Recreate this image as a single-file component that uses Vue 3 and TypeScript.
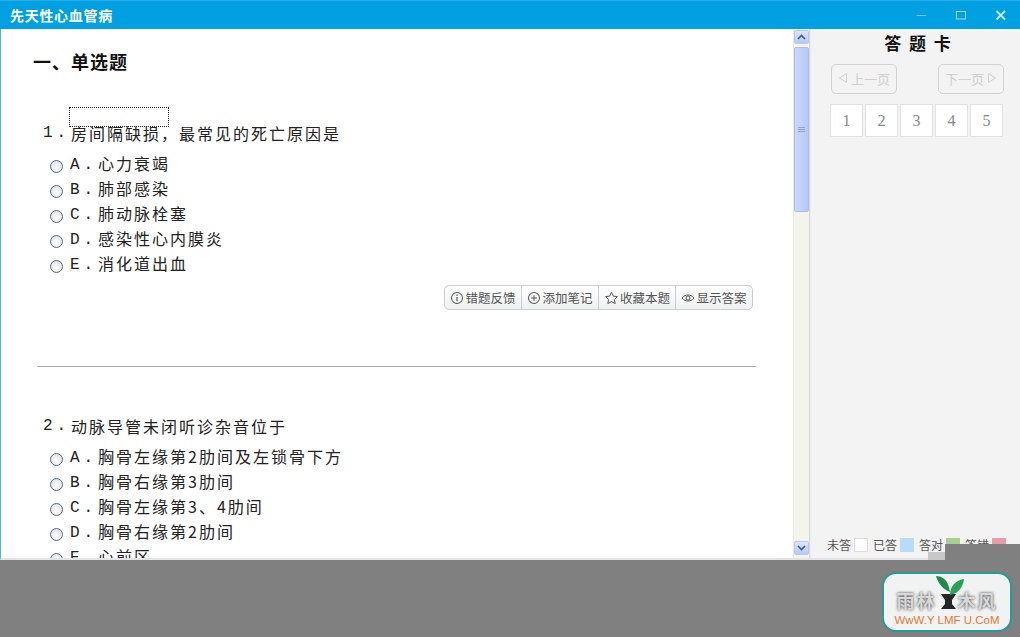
<script setup lang="ts">
interface Question { no: number; title: string; options: string[] }
const questions: Question[] = [
  { no: 1, title: '房间隔缺损，最常见的死亡原因是', options: ['心力衰竭', '肺部感染', '肺动脉栓塞', '感染性心内膜炎', '消化道出血'] },
  { no: 2, title: '动脉导管未闭听诊杂音位于', options: ['胸骨左缘第2肋间及左锁骨下方', '胸骨右缘第3肋间', '胸骨左缘第3、4肋间', '胸骨右缘第2肋间', '心前区'] },
]
const letters = ['A', 'B', 'C', 'D', 'E']
const tools = ['错题反馈', '添加笔记', '收藏本题', '显示答案']
const pages = [1, 2, 3, 4, 5]
</script>

<template>
  <div class="page">
    <div class="window">
      <header class="titlebar">
        <span class="title">先天性心血管病</span>
        <div class="winctl">
          <svg width="12" height="12" viewBox="0 0 12 12"><path d="M1.5 6.5h9.5" stroke="#6fc6ee" stroke-width="1" /></svg>
          <svg width="12" height="12" viewBox="0 0 12 12"><rect x="1.5" y="2.5" width="9" height="7.5" fill="none" stroke="#9adcf6" stroke-width="1" /></svg>
          <svg width="12" height="12" viewBox="0 0 12 12"><path d="M1.5 2l8.5 8.5M10 2l-8.5 8.5" stroke="#c4ecfb" stroke-width="1.8" /></svg>
        </div>
      </header>
      <div class="body">
        <main class="paper">
          <h2 class="section">一、单选题</h2>
          <section v-for="q in questions" :key="q.no" class="question" :class="'q' + q.no">
            <div v-if="q.no === 1" class="focusbox"></div>
            <div class="qtitle"><span class="num">{{ q.no }}.</span><span>{{ q.title }}</span></div>
            <div v-for="(o, i) in q.options" :key="o" class="opt">
              <span class="radio"></span>
              <span class="letter">{{ letters[i] }}.</span><span class="otext">{{ o }}</span>
            </div>
            <div v-if="q.no === 1" class="tools">
              <div v-for="(t, i) in tools" :key="t" class="tool">
                <svg v-if="i === 0" width="14" height="14" viewBox="0 0 14 14"><circle cx="7" cy="7" r="5.5" fill="none" stroke="#555" /><path d="M7 6v4.2M7 3.6v1.3" stroke="#555" stroke-width="1.2" /></svg>
                <svg v-else-if="i === 1" width="14" height="14" viewBox="0 0 14 14"><circle cx="7" cy="7" r="5.5" fill="none" stroke="#555" /><path d="M7 4v6M4 7h6" stroke="#555" /></svg>
                <svg v-else-if="i === 2" width="15" height="14" viewBox="0 0 15 14"><path d="M7.5 1.3l1.8 3.8 4.1.5-3 2.9.8 4.1-3.7-2-3.7 2 .8-4.1-3-2.9 4.1-.5z" fill="none" stroke="#555" /></svg>
                <svg v-else width="14" height="14" viewBox="0 0 14 14"><path d="M1 7c3-4 9-4 12 0-3 4-9 4-12 0z" fill="none" stroke="#555" /><circle cx="7" cy="7" r="2" fill="none" stroke="#555" /></svg>
                <span>{{ t }}</span>
              </div>
            </div>
            <hr v-if="q.no === 1" class="rule" />
          </section>
        </main>
        <div class="scrollbar">
          <div class="arrow up"><svg width="9" height="6" viewBox="0 0 9 6"><path d="M1 5l3.5-3.5L8 5" fill="none" stroke="#3a5a8c" stroke-width="1.6" /></svg></div>
          <div class="track">
            <div class="thumb"><span class="grip"></span></div>
          </div>
          <div class="arrow down"><svg width="9" height="6" viewBox="0 0 9 6"><path d="M1 1l3.5 3.5L8 1" fill="none" stroke="#3a5a8c" stroke-width="1.6" /></svg></div>
        </div>
        <aside class="card">
          <div class="cardtitle">答 题 卡</div>
          <div class="pager">
            <button class="pbtn"><svg width="10" height="12" viewBox="0 0 10 12"><path d="M8.5 1.5v9L1.5 6z" fill="none" stroke="#d0d0d0" /></svg><span>上一页</span></button>
            <button class="pbtn"><span>下一页</span><svg width="10" height="12" viewBox="0 0 10 12"><path d="M1.5 1.5v9L8.5 6z" fill="none" stroke="#d0d0d0" /></svg></button>
          </div>
          <div class="nums">
            <div v-for="p in pages" :key="p" class="numcell">{{ p }}</div>
          </div>
          <div class="legend">
            <span>未答</span><i class="sw white"></i>
            <span>已答</span><i class="sw blue"></i>
            <span>答对</span><i class="sw green"></i>
            <span>答错</span><i class="sw red"></i>
          </div>
        </aside>
      </div>
    </div>
    <div class="patch-light"></div>
    <div class="patch-grey"></div>
    <div class="logo">
      <svg class="sprout" width="32" height="38" viewBox="0 0 32 38">
        <path d="M7 20h15l-4 6v4l4 5H7l4-5v-4z" fill="#262626" />
        <path d="M2 2c6 0 12 3 14 16C10 16 4 10 2 2z" fill="#1f8a4c" />
        <path d="M16 21c0-9 6-15 14-16-1 8-6 15-14 16z" fill="#2aa05a" />
      </svg>
      <div class="logotext"><span>雨林</span><span class="gap">木风</span></div>
      <div class="logourl">WwW.Y LMF U.CoM</div>
    </div>
  </div>
</template>

<style scoped>
.page {
  position: relative;
  width: 1020px;
  height: 637px;
  background: #808080;
  overflow: hidden;
  font-family: "Noto Sans CJK SC", sans-serif;
}
.window {
  height: 558px;
  display: flex;
  flex-direction: column;
  border-left: 1px solid #4fb6e4;
  border-bottom: 2px solid #e4e4e4;
  background: #fff;
}
.titlebar {
  height: 29px;
  flex: none;
  margin-left: -1px;
  background: #00a0e3;
  border-top: 1px solid #27aeea;
  box-sizing: border-box;
  display: flex;
  align-items: center;
  justify-content: space-between;
  padding: 0 13px 0 10px;
}
.title {
  color: #fff;
  font-size: 14px;
  font-weight: 700;
  letter-spacing: 0.7px;
}
.winctl {
  display: flex;
  gap: 28px;
}
.body {
  flex: 1;
  display: flex;
  min-height: 0;
}
.paper {
  width: 792px;
  flex: none;
  overflow: hidden;
  padding: 21px 0 0 32px;
  box-sizing: border-box;
  color: #222;
}
.section {
  margin: 0;
  font-size: 18px;
  line-height: 22px;
  font-weight: 700;
  color: #111;
  letter-spacing: 1px;
}
.question { position: relative; }
.q1 { padding-top: 50px; }
.q2 { padding-top: 48px; }
.focusbox {
  position: absolute;
  left: 36px;
  top: 35px;
  width: 98px;
  height: 18px;
  border: 1px dotted #222;
}
.qtitle {
  font-size: 16px;
  line-height: 22px;
  letter-spacing: 2px;
  margin-left: 10px;
  display: flex;
  margin-bottom: 10px;
}
.num {
  width: 28px;
  font-family: "Liberation Mono", monospace;
  letter-spacing: 4px;
  flex: none;
}
.opt {
  display: flex;
  align-items: center;
  height: 25px;
  font-size: 16px;
  letter-spacing: 2px;
  margin-left: 17px;
}
.radio {
  width: 11px;
  height: 11px;
  border-radius: 50%;
  border: 1px solid #54697e;
  background: radial-gradient(circle at 50% 60%, #fff, #d6dbe1);
  margin-right: 7px;
  flex: none;
}
.letter {
  width: 28px;
  font-family: "Liberation Mono", monospace;
  letter-spacing: 4px;
  flex: none;
  padding-bottom: 4px;
}
.otext {
  padding-bottom: 8px;
  line-height: 22px;
}
.tools {
  display: flex;
  width: 309px;
  height: 25px;
  margin: 6px 0 0 411px;
  border: 1px solid #c9ccd0;
  border-radius: 5px;
  box-sizing: border-box;
  background: linear-gradient(#fff, #eef0f2);
}
.tool {
  flex: 1;
  display: flex;
  align-items: center;
  justify-content: center;
  gap: 1px;
  font-size: 12.5px;
  color: #555;
  border-left: 1px solid #c9ccd0;
}
.tool:first-child { border-left: 0; }
.rule {
  margin: 56px 0 0 4px;
  width: 719px;
  border: 0;
  border-top: 1px solid #aaa;
}
.scrollbar {
  width: 15px;
  flex: none;
  display: flex;
  flex-direction: column;
  background: #f4f4ef;
  border-left: 1px solid #e9e9e4;
  border-right: 1px solid #d8d8d8;
}
.arrow {
  height: 14px;
  flex: none;
  display: flex;
  align-items: center;
  justify-content: center;
  background: linear-gradient(#dce6fb, #b7c9f2);
  border: 1px solid #b9c9ec;
  border-radius: 2px;
  box-sizing: border-box;
}
.arrow.up { margin: 1px 0 3px; }
.arrow.down { margin: 0 0 3px; }
.track { flex: 1; }
.thumb {
  height: 165px;
  background: linear-gradient(90deg, #c9d8fb, #b6c9f6);
  border: 1px solid #a9bde8;
  border-radius: 2px;
  box-sizing: border-box;
  display: flex;
  align-items: center;
  justify-content: center;
}
.grip {
  width: 7px;
  height: 6px;
  background: repeating-linear-gradient(#8fa3cc 0 1px, transparent 1px 2px);
}
.card {
  flex: 1;
  background: #f3f3f3;
  border-left: 1px solid #ececec;
  position: relative;
  display: flex;
  flex-direction: column;
  padding: 0 16px 0 20px;
}
.cardtitle {
  text-align: center;
  font-size: 17px;
  line-height: 20px;
  margin-top: 4px;
  font-weight: 700;
  color: #111;
  word-spacing: 4px;
}
.pager {
  display: flex;
  justify-content: space-between;
  margin-top: 11px;
}
.pbtn {
  width: 66px;
  height: 30px;
  padding: 0 0 2px;
  display: flex;
  align-items: center;
  justify-content: center;
  gap: 3px;
  font: 13px "Noto Sans CJK SC", sans-serif;
  color: #cfcfcf;
  background: #f3f3f3;
  border: 1px solid #d2d2d2;
  border-radius: 5px;
}
.nums {
  display: flex;
  gap: 2px;
  margin: 10px 0 0 -1px;
}
.numcell {
  width: 33px;
  height: 33px;
  box-sizing: border-box;
  background: #fff;
  border: 1px solid #e2e2e2;
  display: flex;
  align-items: center;
  justify-content: center;
  font: 16px "Liberation Serif", serif;
  color: #888;
}
.legend {
  position: absolute;
  left: 16px;
  bottom: 5px;
  display: flex;
  align-items: center;
  font-size: 12px;
  color: #555;
  white-space: nowrap;
}
.sw {
  width: 12px;
  height: 12px;
  margin: 0 5px 0 3px;
  border: 1px solid #ddd;
  flex: none;
}
.white { background: #fff; }
.blue { background: #b8dcf6; border-color: #b8dcf6; }
.green { background: #a9d18e; border-color: #a9d18e; }
.red { background: #e89ca4; border-color: #e89ca4; }
.patch-light {
  position: absolute;
  left: 928px;
  top: 552px;
  width: 17px;
  height: 8px;
  background: #c8c8c8;
}
.patch-grey {
  position: absolute;
  left: 945px;
  top: 544px;
  width: 75px;
  height: 16px;
  background: #808080;
}
.logo {
  position: absolute;
  left: 882px;
  top: 572px;
  width: 130px;
  height: 60px;
  box-sizing: border-box;
  background: #f1f3f2;
  border: 2px solid #2a9a94;
  border-radius: 14px;
  overflow: hidden;
  text-align: center;
}
.sprout {
  position: absolute;
  left: 50px;
  top: 0;
}
.logotext {
  margin-top: 14px;
  font-size: 18px;
  line-height: 24px;
  font-weight: 700;
  color: #d8d8d8;
  letter-spacing: 2px;
  text-shadow: 0 0 3px #333;
}
.gap { margin-left: 21px; }
.logourl {
  font: 11.5px/14px "Liberation Sans", sans-serif;
  color: #e07a35;
  margin-top: 1px;
}
</style>
